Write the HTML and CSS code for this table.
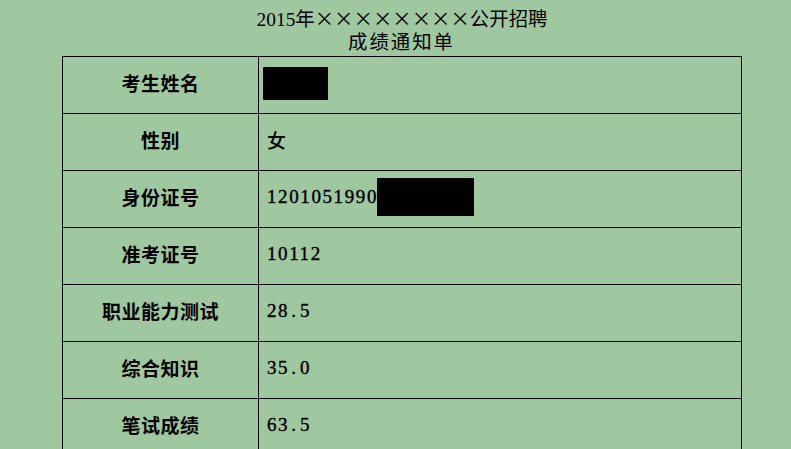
FILE: index.html
```html
<!DOCTYPE html>
<html lang="zh">
<head>
<meta charset="utf-8">
<title>成绩通知单</title>
<link rel="stylesheet" href="styles.css">
</head>
<body>
<div class="title">
  <div class="line line1">2015年<span class="x">××××××××</span>公开招聘</div>
  <div class="line line2">成绩通知单</div>
</div>
<div class="grid">
  <div class="label">考生姓名</div>
  <div class="value"><span class="redact redact-name"></span></div>
  <div class="label">性别</div>
  <div class="value">女</div>
  <div class="label">身份证号</div>
  <div class="value"><span class="num">1201051990</span><span class="redact redact-id"></span></div>
  <div class="label">准考证号</div>
  <div class="value"><span class="num">10112</span></div>
  <div class="label">职业能力测试</div>
  <div class="value"><span class="num">28<span class="dot">.</span>5</span></div>
  <div class="label">综合知识</div>
  <div class="value"><span class="num">35<span class="dot">.</span>0</span></div>
  <div class="label">笔试成绩</div>
  <div class="value"><span class="num">63<span class="dot">.</span>5</span></div>
</div>
</body>
</html>
```
FILE: styles.css
```css
html, body {
  margin: 0;
  padding: 0;
  background: #a0c8a0;
  color: #000;
}
body {
  font-family: "Liberation Serif", "Noto Sans CJK SC", serif;
  height: 449px;
  overflow: hidden;
}
.title {
  padding-top: 6px;
  text-align: center;
  font-size: 19.4px;
  line-height: 23px;
  height: 50px;
}
.title .line {
  font-family: "Liberation Serif", "Noto Sans CJK SC", serif;
}
.title .line1 {
  padding-left: 13px;
}
.title .line2 {
  letter-spacing: 2px;
  padding-left: 12px;
}
.title .x {
  font-family: "Noto Sans CJK SC", sans-serif;
}
.grid {
  margin-left: 62px;
  display: grid;
  grid-template-columns: 196px 483px;
  grid-auto-rows: 57px;
  width: max-content;
  border-left: 1px solid #000;
  border-top: 1px solid #000;
}
.label, .value {
  box-sizing: border-box;
  border-right: 1px solid #000;
  border-bottom: 1px solid #000;
  padding-bottom: 5px;
  display: flex;
  align-items: center;
  font-family: "Noto Sans CJK SC", sans-serif;
  font-size: 19px;
}
.label {
  justify-content: center;
  font-weight: bold;
  letter-spacing: 0.5px;
}
.value {
  padding-left: 8px;
  font-weight: 500;
}
.num {
  font-family: "Liberation Serif", serif;
  font-size: 19px;
  letter-spacing: 1.6px;
  -webkit-text-stroke: 0.4px #000;
}
.dot {
  display: inline-block;
  width: 8.7px;
  padding-left: 2px;
  text-align: left;
}
.redact {
  display: inline-block;
  background: #000;
  align-self: flex-start;
}
.redact-name {
  width: 65px;
  height: 33px;
  margin-left: -4px;
  margin-top: 10px;
}
.redact-id {
  width: 97px;
  height: 38px;
  margin-left: -1px;
  margin-top: 7px;
}
```
